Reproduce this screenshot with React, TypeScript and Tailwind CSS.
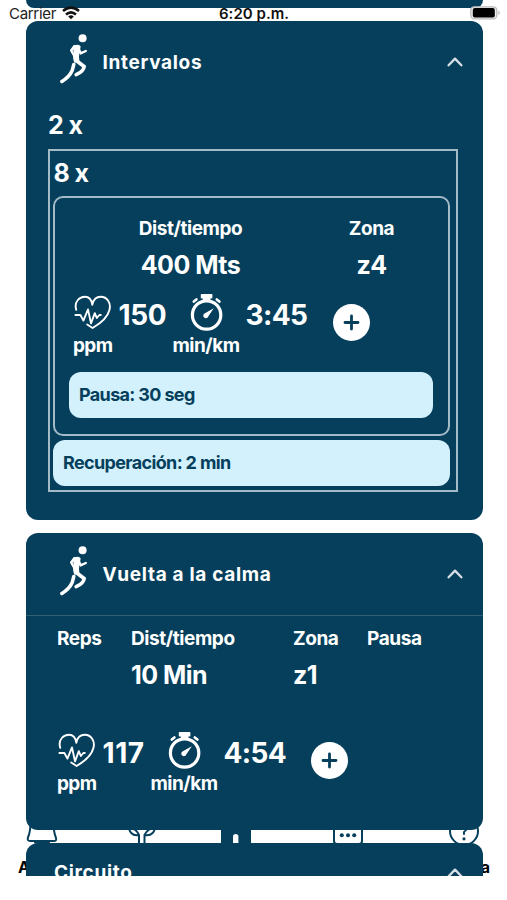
import type { ReactNode } from "react";

function Runner() {
  return (
    <svg width="30" height="52" viewBox="0 0 30 52" fill="none" stroke="#fff" strokeLinecap="round" strokeLinejoin="round">
      <circle cx="22.6" cy="5.2" r="4" fill="#fff" stroke="none" />
      <path d="M13.6 13.4 Q18 11.6 19.8 13.6 L18.6 20 Q17.8 24 18.6 27.4 L15 29 Q13 24 14.4 18.6Z" fill="#fff" strokeWidth="1.6" />
      <path d="M14.4 13.2 L11.2 17.4 L13.8 22" strokeWidth="2.5" />
      <path d="M18.8 16 L20.6 20.4 L25.8 18" strokeWidth="2.4" />
      <path d="M16.8 28 L24.2 33.4 Q23.6 38.6 16.2 41.6" strokeWidth="3.7" />
      <path d="M13.8 31.5 L12.2 37.5 Q9.4 43.8 1.9 48.5" strokeWidth="3.5" />
    </svg>
  );
}

function Chevron() {
  return (
    <svg width="18" height="12" viewBox="0 0 18 12" fill="none" stroke="#d5dfe5" strokeWidth="2.3" strokeLinecap="round" strokeLinejoin="round">
      <path d="M2.6 9.3 L9 2.6 L15.4 9.3" />
    </svg>
  );
}

function Heart() {
  return (
    <svg width="38" height="36" viewBox="0 0 38 36" fill="none" stroke="#fff" strokeWidth="1.9" strokeLinecap="round" strokeLinejoin="round">
      <path d="M2.2 14.8 C-.2 6 6 1.8 11 1.8 C15.4 1.8 17.6 5 18.3 9.8 C19.2 5 22.4 1.8 26.8 1.8 C33 1.8 37.4 8 35.4 15 C33.8 22 25.4 29 18.6 33 L13.2 29.5" />
      <path d="M1.4 20 H6.4 L9.4 25.6 L14 14.4 L17 28.4 L20.8 18.2 L22.8 23 L25.4 20 H26.8" />
    </svg>
  );
}

function Stopwatch() {
  return (
    <svg width="34" height="39" viewBox="0 0 34 39" fill="none" stroke="#fff" strokeLinecap="round">
      <circle cx="16.6" cy="22" r="14.2" strokeWidth="3.2" />
      <rect x="10.8" y="1" width="11.6" height="4.6" rx=".8" fill="#fff" stroke="none" />
      <path d="M12.8 4 H20.4 V9 H12.8Z" fill="#fff" stroke="none" />
      <path d="M3.8 8.6 L6.4 6.4 M29.4 8.6 L26.8 6.4" strokeWidth="2.6" />
      <path d="M23.8 15.2 L18.4 23.2 A2.6 2.6 0 1 1 14.9 20.2Z" fill="#fff" stroke="none" />
    </svg>
  );
}

function PlusButton() {
  return (
    <button className="flex size-[37px] shrink-0 items-center justify-center rounded-full bg-white" aria-label="+">
      <svg width="17" height="17" viewBox="0 0 17 17" stroke="#053f5c" strokeWidth="2.8" strokeLinecap="round">
        <path d="M8.5 2 V15 M2 8.5 H15" />
      </svg>
    </button>
  );
}

function CardHeader({ title }: { title: string }) {
  return (
    <header className="flex h-[82px] shrink-0 items-center pr-[18.5px]">
      <div className="w-[77px] pb-[6px] pl-[34px]">
        <Runner />
      </div>
      <h2 className="flex-1 pt-[2px] text-[19px] leading-6 font-bold tracking-[0.68px]">{title}</h2>
      <Chevron />
    </header>
  );
}

function Metrics({ bpm, pace, bpmClass, bpmWidth }: { bpm: string; pace: string; bpmClass: string; bpmWidth: string }) {
  return (
    <div className="flex h-[66px]">
      <div className={bpmWidth}>
        <div className="flex h-[40px] items-start">
          <div className="w-[45.5px] pt-[2px] pl-px"><Heart /></div>
          <span className={bpmClass}>{bpm}</span>
        </div>
        <div className="mt-[1px] text-[19px] leading-6 font-bold tracking-[-0.65px]">ppm</div>
      </div>
      <div className="w-[160px]">
        <div className="flex h-[40px] items-start">
          <div className="w-[73px] pl-[17.5px]"><Stopwatch /></div>
          <span className="pt-[5px] text-[28px] leading-[34px] font-bold tracking-[-0.65px]">{pace}</span>
        </div>
        <div className="mt-[1px] text-[19px] leading-6 font-bold tracking-[-0.5px]">min/km</div>
      </div>
      <div className="pt-[11px]"><PlusButton /></div>
    </div>
  );
}

function Note({ children }: { children: ReactNode }) {
  return (
    <div className="flex h-[46px] items-center rounded-[12px] bg-[#d2f1fc] pl-[10px] text-[18px] font-bold tracking-[-0.65px] text-[#053f5c]">
      {children}
    </div>
  );
}

function Label({ children }: { children: ReactNode }) {
  return <div className="text-[19px] leading-6 font-bold tracking-[-0.42px]">{children}</div>;
}

function Value({ children }: { children: ReactNode }) {
  return <div className="mt-[9px] text-[25px] leading-[30px] font-bold tracking-[-0.5px]">{children}</div>;
}

function TabBar() {
  return (
    <nav className="absolute inset-x-0 top-[810px] h-[90px] text-black">
      <svg width="507" height="45" viewBox="0 810 507 45" fill="none" stroke="#053f5c" strokeWidth="2" strokeLinecap="round" strokeLinejoin="round">
        <path d="M30.5 822 Q30.5 832 27.8 838 Q27.3 841 30 841 H54 Q56.8 841 56 838 Q53.5 832 53.5 822 M35 842.5 H49" />
        <path d="M139 845 V835 Q129 837 128 823 M144.5 845 V835 Q155 837 156 823 M129 828 Q136 828 139 835 M155 828 Q148 828 144.5 835" />
        <path d="M222 850 V829 Q236 820 250 829 V850Z" fill="#053f5c" />
        <path d="M233 850 V836.5 Q233 834 235.7 834 Q238.4 834 238.4 836.5 V850Z" fill="#fff" stroke="none" />
        <path d="M334 824 V841 Q334 844 337 844 H359 Q362 844 362 841 V824Z" />
        <g fill="#053f5c" stroke="none"><circle cx="341.8" cy="835.3" r="2" /><circle cx="348" cy="835.3" r="2" /><circle cx="354.2" cy="835.3" r="2" /></g>
        <circle cx="464" cy="831" r="14" />
        <path d="M460 827 Q461 823 465 824 Q470 828 464 832 V834" />
        <circle cx="464" cy="838.8" r="1.6" fill="#053f5c" stroke="none" />
      </svg>
      <div className="flex justify-between pr-[17px] pl-[18px] text-[16px] leading-6 font-bold">
        <span>A</span>
        <span>a</span>
      </div>
    </nav>
  );
}

function StatusBar() {
  return (
    <div className="absolute inset-x-0 top-[3px] flex h-[21px] items-center pl-[9px] text-[15px] leading-5 text-[#222]">
      <span className="w-[53px] tracking-[-0.3px]">Carrier</span>
      <svg width="18" height="14" viewBox="0 0 18 14" fill="none" stroke="#111" strokeWidth="2.5" className="-mt-[1px]">
        <path d="M1 5 Q9 -1.8 17 5 M4 8.5 Q9 4.2 14 8.5" />
        <path d="M6.2 10.4 Q9 8 11.8 10.4 L9 13.3Z" fill="#111" stroke="none" />
      </svg>
      <span className="ml-[139px] flex-1 text-[15px] font-semibold tracking-[0.02px] text-[#111]">6:20 p.m.</span>
      <svg width="31" height="14" viewBox="0 0 31 14" className="mr-[6px] -mt-px">
        <rect x=".8" y=".8" width="26" height="12" rx="3.5" fill="#eee" stroke="#bbb" strokeWidth="1.3" />
        <rect x="2.8" y="2" width="22" height="9.6" rx="2" fill="#000" />
        <path d="M28.5 4.5 Q31 6.8 28.5 9Z" fill="#aaa" />
      </svg>
    </div>
  );
}

export default function App() {
  return (
    <div className="relative h-[900px] w-[507px] overflow-hidden bg-white font-['Inter','Liberation_Sans',sans-serif]">
      <TabBar />
      <main className="relative flex h-[875.5px] flex-col gap-[12.5px] overflow-hidden pr-[24.5px] pl-[25.5px] text-white">
        <section className="h-[8px] shrink-0 rounded-b-[12px] bg-[#053f5c]" />

        <section className="h-[499.5px] shrink-0 rounded-[12px] bg-[#053f5c]">
          <CardHeader title="Intervalos" />
          <div className="pr-[24.5px] pl-[22px]">
            <div className="pt-[7px] pl-[.5px] text-[25px] leading-[30px] font-bold tracking-[-0.6px]">2 x</div>
            <div className="mt-[9px] h-[343.5px] border-2 border-[#a3bbc7] pr-[6px] pl-[3px]">
              <div className="pt-[7.5px] pl-px text-[25px] leading-[30px] font-bold tracking-[-0.6px]">8 x</div>
              <div className="mt-[8px] h-[239.5px] rounded-[10px] border-2 border-[#a3bbc7] pr-[15px] pl-[14.5px]">
                <div className="flex pt-[19px] text-center">
                  <div className="w-[243px]"><Label>Dist/tiempo</Label><Value>400 Mts</Value></div>
                  <div className="w-[119px]"><Label>Zona</Label><Value>z4</Value></div>
                </div>
                <div className="mt-[13px] pl-[4px]">
                  <Metrics bpm="150" pace="3:45" bpmWidth="w-[99.5px]" bpmClass="pt-[5px] text-[28px] leading-[34px] font-bold tracking-[-0.3px]" />
                </div>
                <div className="mt-[12.5px]"><Note>Pausa: 30 seg</Note></div>
              </div>
              <div className="mt-[4px] pr-[.5px] pl-[.5px]"><Note>Recuperación: 2 min</Note></div>
            </div>
          </div>
        </section>

        <section className="h-[297.5px] shrink-0 rounded-[12px] bg-[#053f5c]">
          <CardHeader title="Vuelta a la calma" />
          <div className="border-t border-[#326073] pl-[31.5px]">
            <div className="flex pt-[11px]">
              <div className="w-[74px]"><Label>Reps</Label></div>
              <div className="w-[162px]"><Label>Dist/tiempo</Label><Value>10 Min</Value></div>
              <div className="w-[74px]"><Label>Zona</Label><Value>z1</Value></div>
              <div><Label>Pausa</Label></div>
            </div>
            <div className="mt-[41.5px]">
              <Metrics bpm="117" pace="4:54" bpmWidth="w-[93.5px]" bpmClass="pt-[5px] text-[28px] leading-[34px] font-bold tracking-[0.6px]" />
            </div>
          </div>
        </section>

        <section className="flex h-[60px] shrink-0 items-center rounded-t-[12px] bg-[#053f5c] pr-[18.5px] pl-[28.5px]">
          <h2 className="flex-1 text-[19px] leading-6 font-bold tracking-[0.7px]">Circuito</h2>
          <Chevron />
        </section>
      </main>
      <StatusBar />
    </div>
  );
}
